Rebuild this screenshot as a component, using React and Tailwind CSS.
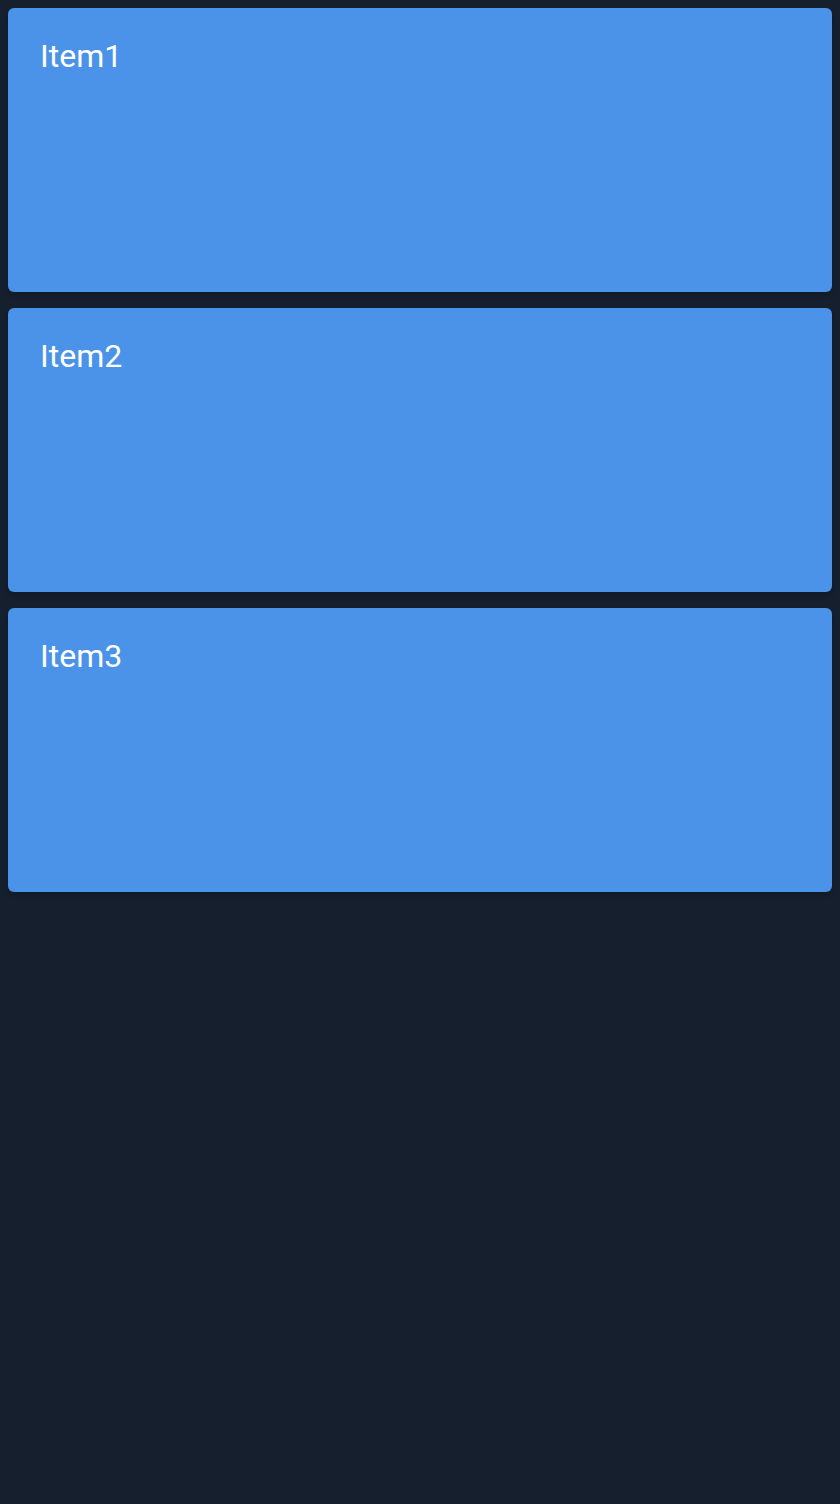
const ITEMS = ['Item1', 'Item2', 'Item3'];

export default function App() {
  return (
    <div className="min-h-[1504px] bg-[#151f2d] p-2 flex flex-col gap-4" style={{ fontFamily: 'Roboto, sans-serif' }}>
      {ITEMS.map((item) => (
        <div key={item} className="h-[284px] rounded-md bg-[#4a93e8] px-8 pt-[30px] shadow-md">
          <div className="text-[32px] leading-[36px] text-white">{item}</div>
        </div>
      ))}
    </div>
  );
}
